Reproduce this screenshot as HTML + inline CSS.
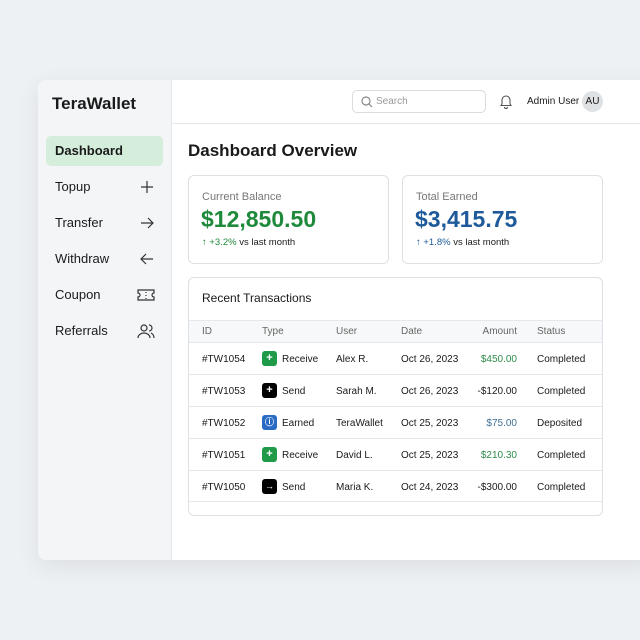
<!DOCTYPE html>
<html><head><style>
*{margin:0;padding:0;box-sizing:border-box}
body{width:640px;height:640px;background:#eef1f4;font-family:"Liberation Sans",sans-serif;color:#1a1a1a;position:relative;overflow:hidden}
.app{position:absolute;left:38px;top:80px;width:620px;height:480px;background:#fff;border-radius:8px 0 0 8px;box-shadow:0 6px 24px rgba(0,0,0,.08);overflow:hidden}
.side{position:absolute;left:0;top:0;width:134px;height:480px;background:#f3f5f7;border-right:1px solid #e3e6ea}
.logo{position:absolute;left:14px;top:14px;font-size:17px;font-weight:bold}
.nav{position:absolute;left:8px;width:117px;height:30px;font-size:13px;line-height:30px;padding-left:9px}
.nav.act{background:#d5eedb;border-radius:5px;font-weight:bold}
.nav svg{position:absolute;right:8px;top:7px}
.a{position:absolute}
.hdr{position:absolute;left:134px;top:0;right:0;height:44px;border-bottom:1px solid #e3e6ea}
.card{position:absolute;border:1px solid #dde0e4;border-radius:6px;background:#fff}
.t{position:absolute;font-size:10px;white-space:nowrap}
.row{position:absolute;left:0;right:0;height:32px;border-top:1px solid #e6e8eb}
.ic{position:absolute;width:15px;height:15px;border-radius:3px;color:#fff;font-size:11px;line-height:15px;text-align:center;font-weight:bold}
</style></head><body>
<div class="app">
 <div class="side">
  <div class="logo">TeraWallet</div>
  <div class="nav act" style="top:56px">Dashboard</div>
  <div class="nav" style="top:92px">Topup<svg width="16" height="16" viewBox="0 0 16 16" fill="none" stroke="#333" stroke-width="1.2"><path d="M8 2v12M2 8h12"/></svg></div>
  <div class="nav" style="top:128px">Transfer<svg width="16" height="16" viewBox="0 0 16 16" fill="none" stroke="#333" stroke-width="1.2"><path d="M2 8h12M9 3l5 5-5 5"/></svg></div>
  <div class="nav" style="top:164px">Withdraw<svg width="16" height="16" viewBox="0 0 16 16" fill="none" stroke="#333" stroke-width="1.2"><path d="M14 8H2M7 3L2 8l5 5"/></svg></div>
  <div class="nav" style="top:200px">Coupon<svg width="18" height="16" viewBox="0 0 18 16" fill="none" stroke="#333" stroke-width="1.2"><path d="M1 3h16v3a2 2 0 0 0 0 4v3H1v-3a2 2 0 0 0 0-4z M9 5v1M9 8v1M9 11v1"/></svg></div>
  <div class="nav" style="top:236px">Referrals<svg width="18" height="16" viewBox="0 0 18 16" fill="none" stroke="#333" stroke-width="1.2"><circle cx="7" cy="5" r="3"/><path d="M1 15c0-3 3-5 6-5s6 2 6 5M12 2a3 3 0 0 1 0 6M14 10c2 1 3 3 3 5"/></svg></div>
 </div>
 <div class="hdr">
  <div class="a" style="left:180px;top:10px;width:134px;height:23px;border:1px solid #d8dbe0;border-radius:5px"><svg class="a" style="left:8px;top:5px" width="12" height="12" viewBox="0 0 12 12" fill="none" stroke="#888" stroke-width="1.2"><circle cx="5" cy="5" r="4"/><path d="M8 8l3 3"/></svg><span class="t" style="left:23px;top:5px;color:#999">Search</span></div>
  <svg class="a" style="left:327px;top:14px" width="14" height="15" viewBox="0 0 14 15" fill="none" stroke="#555" stroke-width="1.1"><path d="M3 10V6a4 4 0 0 1 8 0v4l1 1.5H2z M5.5 13a1.5 1.5 0 0 0 3 0"/></svg>
  <span class="t" style="left:355px;top:16px;font-size:10px">Admin User</span>
  <div class="a" style="left:410px;top:11px;width:21px;height:21px;border-radius:50%;background:#dfe2e5;font-size:10px;line-height:21px;text-align:center">AU</div>
 </div>
 <div class="a" style="left:150px;top:61px;font-size:17px;font-weight:bold">Dashboard Overview</div>
 <div class="card" style="left:150px;top:95px;width:201px;height:89px">
  <span class="t" style="left:13px;top:15px;color:#777;font-size:11px">Current Balance</span>
  <span class="t" style="left:12px;top:30px;color:#1f8a3c;font-size:23px;font-weight:bold">$12,850.50</span>
  <span class="t" style="left:13px;top:61px;font-size:9.5px"><span style="color:#1f8a3c">↑ +3.2%</span> vs last month</span>
 </div>
 <div class="card" style="left:364px;top:95px;width:201px;height:89px">
  <span class="t" style="left:13px;top:15px;color:#777;font-size:11px">Total Earned</span>
  <span class="t" style="left:12px;top:30px;color:#1e5a9a;font-size:23px;font-weight:bold">$3,415.75</span>
  <span class="t" style="left:13px;top:61px;font-size:9.5px"><span style="color:#1e5a9a">↑ +1.8%</span> vs last month</span>
 </div>
 <div class="card" style="left:150px;top:197px;width:415px;height:239px;overflow:hidden">
  <span class="t" style="left:13px;top:13px;font-size:12px">Recent Transactions</span>
  <div class="row" style="top:42px;height:22px;background:#f7f8f9;color:#666">
   <span class="t" style="left:13px;top:5px">ID</span><span class="t" style="left:73px;top:5px">Type</span><span class="t" style="left:147px;top:5px">User</span><span class="t" style="left:212px;top:5px">Date</span><span class="t" style="right:85px;top:5px">Amount</span><span class="t" style="left:348px;top:5px">Status</span>
  </div>
  <div class="row" style="top:64px"><span class="t" style="left:13px;top:11px">#TW1054</span><div class="ic" style="left:73px;top:8px;background:#1f9a48">+</div><span class="t" style="left:93px;top:11px">Receive</span><span class="t" style="left:147px;top:11px">Alex R.</span><span class="t" style="left:212px;top:11px">Oct 26, 2023</span><span class="t" style="right:85px;top:11px;color:#2e8b4a">$450.00</span><span class="t" style="left:348px;top:11px">Completed</span></div>
  <div class="row" style="top:96px"><span class="t" style="left:13px;top:11px">#TW1053</span><div class="ic" style="left:73px;top:8px;background:#000">+</div><span class="t" style="left:93px;top:11px">Send</span><span class="t" style="left:147px;top:11px">Sarah M.</span><span class="t" style="left:212px;top:11px">Oct 26, 2023</span><span class="t" style="right:85px;top:11px">-$120.00</span><span class="t" style="left:348px;top:11px">Completed</span></div>
  <div class="row" style="top:128px"><span class="t" style="left:13px;top:11px">#TW1052</span><div class="ic" style="left:73px;top:8px;background:#2a6cc4;font-size:9px">ⓘ</div><span class="t" style="left:93px;top:11px">Earned</span><span class="t" style="left:147px;top:11px">TeraWallet</span><span class="t" style="left:212px;top:11px">Oct 25, 2023</span><span class="t" style="right:85px;top:11px;color:#3d6f96">$75.00</span><span class="t" style="left:348px;top:11px">Deposited</span></div>
  <div class="row" style="top:160px"><span class="t" style="left:13px;top:11px">#TW1051</span><div class="ic" style="left:73px;top:8px;background:#1f9a48">+</div><span class="t" style="left:93px;top:11px">Receive</span><span class="t" style="left:147px;top:11px">David L.</span><span class="t" style="left:212px;top:11px">Oct 25, 2023</span><span class="t" style="right:85px;top:11px;color:#2e8b4a">$210.30</span><span class="t" style="left:348px;top:11px">Completed</span></div>
  <div class="row" style="top:192px;border-bottom:1px solid #e6e8eb"><span class="t" style="left:13px;top:11px">#TW1050</span><div class="ic" style="left:73px;top:8px;background:#000;font-size:9px">→</div><span class="t" style="left:93px;top:11px">Send</span><span class="t" style="left:147px;top:11px">Maria K.</span><span class="t" style="left:212px;top:11px">Oct 24, 2023</span><span class="t" style="right:85px;top:11px">-$300.00</span><span class="t" style="left:348px;top:11px">Completed</span></div>
 </div>
</div>
</body></html>
